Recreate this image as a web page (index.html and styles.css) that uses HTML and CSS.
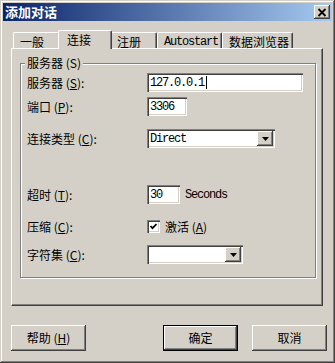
FILE: index.html
```html
<!DOCTYPE html>
<html lang="zh-CN">
<head>
    <meta charset="UTF-8">
    <title>添加对话</title>
    <link rel="stylesheet" href="styles.css">
</head>
<body>
    <div class="window">
        <div class="titlebar">
            <span class="title">添加对话</span>
            <span class="close">
                <svg width="10" height="9" viewBox="0 0 10 9"><path d="M1.5 1 L8.5 8 M8.5 1 L1.5 8" stroke="#000" stroke-width="1.8" fill="none"/></svg>
            </span>
        </div>

        <!-- Abas -->
        <div class="tabs">
            <div class="tab w-general">一般</div>
            <div class="tab active">连接</div>
            <div class="tab w-reg">注册</div>
            <div class="tab mono w-auto">Autostart</div>
            <div class="tab w-browser">数据浏览器</div>
        </div>

        <div class="panel">
            <fieldset class="group">
                <legend>服务器 (S)</legend>

                <div class="row">
                    <label>服务器 (<u>S</u>):</label>
                    <div class="field mono w-server">127.0.0.1<span class="caret"></span></div>
                </div>
                <div class="row gap-5">
                    <label>端口 (<u>P</u>):</label>
                    <div class="field mono w-port">3306</div>
                </div>
                <div class="row gap-13">
                    <label>连接类型 (<u>C</u>):</label>
                    <div class="field combo mono w-type">
                        <span>Direct</span>
                        <span class="drop"><svg width="7" height="4" viewBox="0 0 7 4"><path d="M0 0 H7 L3.5 4 Z" fill="#000"/></svg></span>
                    </div>
                </div>
                <div class="row gap-37">
                    <label>超时 (<u>T</u>):</label>
                    <div class="inline">
                        <div class="field mono w-timeout">30</div>
                        <span class="mono unit">Seconds</span>
                    </div>
                </div>
                <div class="row gap-13">
                    <label>压缩 (<u>C</u>):</label>
                    <div class="inline">
                        <span class="check"><svg width="7" height="7" viewBox="0 0 7 7"><path d="M0.5 3 L2.5 5.2 L6.5 1" stroke="#000" stroke-width="1.8" fill="none"/></svg></span>
                        <span class="check-label">激活 (<u>A</u>)</span>
                    </div>
                </div>
                <div class="row gap-9">
                    <label>字符集 (<u>C</u>):</label>
                    <div class="field combo w-charset">
                        <span></span>
                        <span class="drop"><svg width="7" height="4" viewBox="0 0 7 4"><path d="M0 0 H7 L3.5 4 Z" fill="#000"/></svg></span>
                    </div>
                </div>
            </fieldset>
        </div>

        <div class="buttons">
            <div class="button">帮助 (<u>H</u>)</div>
            <div class="spacer"></div>
            <div class="button default">确定</div>
            <div class="button">取消</div>
        </div>
    </div>
</body>
</html>
```

FILE: styles.css
```css
* {
    margin: 0;
    padding: 0;
    box-sizing: border-box;
}

body {
    font-family: "Noto Sans CJK SC", "Noto Sans", sans-serif;
    font-size: 12px;
    line-height: 14px;
    color: #000;
    background: #d4d0c8;
}

.mono {
    font-family: "Liberation Mono", "Noto Sans CJK SC", monospace;
    font-size: 12px;
    letter-spacing: -1.2px;
}

.window {
    width: 335px;
    height: 363px;
    padding: 3px;
    background: #d4d0c8;
    box-shadow: inset -1px -1px #404040, inset 1px 1px #d4d0c8,
                inset -2px -2px #808080, inset 2px 2px #fff;
}

.titlebar {
    height: 18px;
    display: flex;
    align-items: center;
    justify-content: space-between;
    padding: 0 2px 0 2px;
    background: linear-gradient(90deg, #0a246a 0%, #a6caf0 100%);
}

.title {
    color: #fff;
    font-weight: bold;
    font-size: 13px;
}

.close {
    width: 16px;
    height: 14px;
    display: flex;
    align-items: center;
    justify-content: center;
    background: #d4d0c8;
    box-shadow: inset -1px -1px #404040, inset 1px 1px #fff,
                inset -2px -2px #808080;
}

/* abas */
.tabs {
    display: flex;
    align-items: flex-end;
    height: 18px;
    margin-top: 9px;
    padding-left: 10px;
}

.tab {
    height: 16px;
    padding: 2px 0 0 6px;
    border: 1px solid;
    border-color: #fff #404040 transparent #fff;
    border-bottom: none;
    border-radius: 2px 2px 0 0;
    box-shadow: inset -1px 0 #808080;
    white-space: nowrap;
}

.w-general { width: 47px; }
.w-reg { width: 47px; }
.w-auto { width: 65px; }
.w-browser { width: 71px; }

.tab.active {
    position: relative;
    z-index: 1;
    width: 54px;
    height: 19px;
    margin: 0 -2px -1px;
    padding: 2px 0 0 8px;
    background: #d4d0c8;
}

.panel {
    width: 312px;
    height: 258px;
    margin-left: 8px;
    border: 1px solid;
    border-color: #fff #404040 #404040 #fff;
    box-shadow: inset -1px -1px #808080;
    padding-top: 1px;
}

.group {
    margin: 6px 6px 0 8px;
    padding: 3px 6px 13px 6px;
    border: 1px solid #808080;
    box-shadow: inset 1px 1px #fff, 1px 1px #fff;
}

.group legend {
    padding: 0 2px;
    margin-left: -2px;
    background: #d4d0c8;
    line-height: 14px;
}

.row {
    display: grid;
    grid-template-columns: 120px auto;
    align-items: center;
    height: 19px;
}

.gap-5 { margin-top: 5px; }
.gap-9 { margin-top: 9px; }
.gap-13 { margin-top: 13px; }
.gap-37 { margin-top: 37px; }

.field {
    height: 19px;
    display: flex;
    align-items: center;
    padding: 0 3px;
    background: #fff;
    box-shadow: inset 1px 1px #808080, inset 2px 2px #404040,
                inset -1px -1px #fff, inset -2px -2px #d4d0c8;
}

.w-server { width: 156px; }
.w-port { width: 40px; }
.w-type { width: 128px; }
.w-timeout { width: 33px; }
.w-charset { width: 96px; }

.caret {
    width: 1px;
    height: 13px;
    margin-left: 2px;
    background: #000;
}

.combo {
    justify-content: space-between;
    padding: 2px 2px 2px 3px;
}

.drop {
    width: 16px;
    height: 15px;
    display: flex;
    align-items: center;
    justify-content: center;
    background: #d4d0c8;
    box-shadow: inset -1px -1px #404040, inset 1px 1px #fff,
                inset -2px -2px #808080;
}

.inline {
    display: flex;
    align-items: center;
}

.unit {
    margin-left: 5px;
}

.check {
    width: 13px;
    height: 13px;
    display: flex;
    align-items: center;
    justify-content: center;
    background: #fff;
    box-shadow: inset 1px 1px #808080, inset 2px 2px #404040,
                inset -1px -1px #fff, inset -2px -2px #d4d0c8;
}

.check-label {
    margin-left: 5px;
}

/* botoes */
.buttons {
    display: flex;
    margin-top: 19px;
    padding: 0 5px 0 8px;
}

.spacer {
    flex: 1;
}

.button {
    width: 75px;
    height: 26px;
    display: flex;
    align-items: center;
    justify-content: center;
    background: #d4d0c8;
    box-shadow: inset -1px -1px #404040, inset 1px 1px #fff,
                inset -2px -2px #808080, inset 2px 2px #d4d0c8;
}

.button.default {
    margin-right: 14px;
    border: 1px solid #000;
    box-shadow: inset -1px -1px #404040, inset 1px 1px #fff,
                inset -2px -2px #808080;
}
```
